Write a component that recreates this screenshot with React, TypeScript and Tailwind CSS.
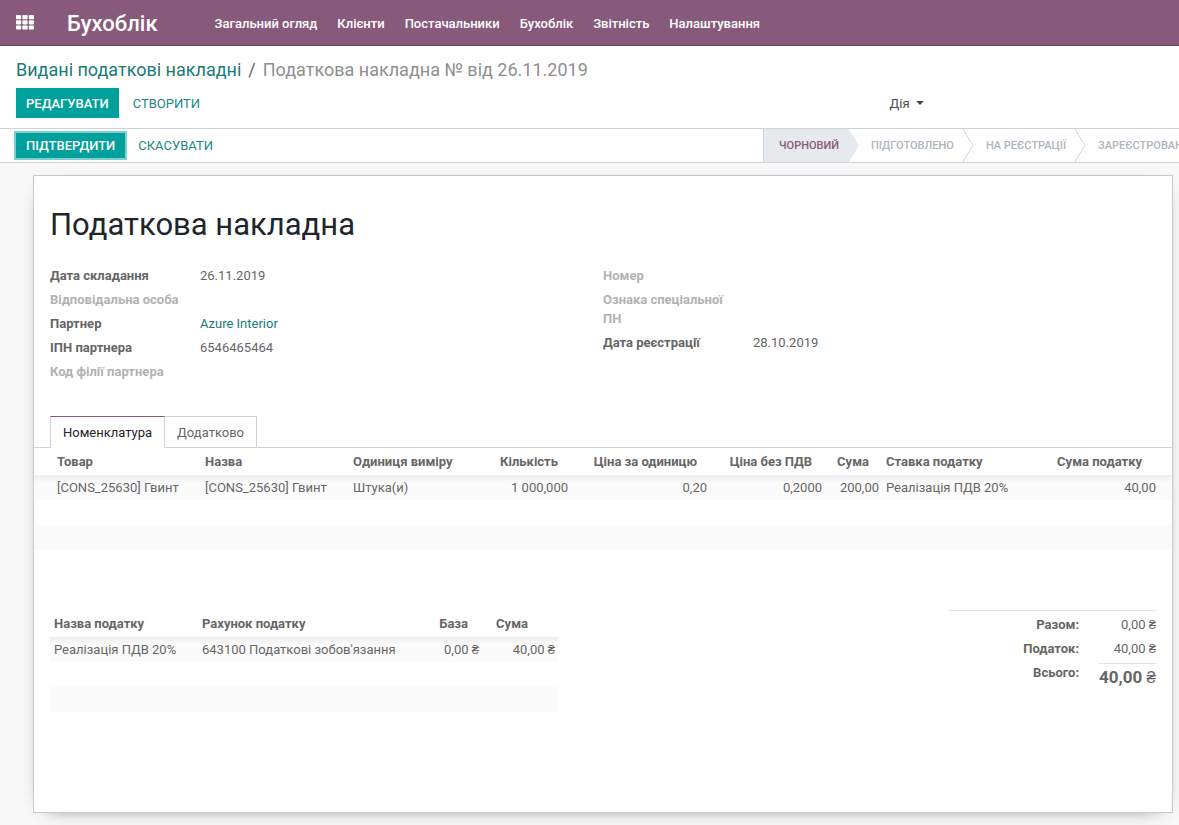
import React from "react";

const menus = ["Загальний огляд", "Клієнти", "Постачальники", "Бухоблік", "Звітність", "Налаштування"];

const steps = ["Чорновий", "Підготовлено", "На реєстрації", "Зареєстровано"];

type FieldData = { label: string; value?: string; link?: boolean };

const leftFields: FieldData[] = [
  { label: "Дата складання", value: "26.11.2019" },
  { label: "Відповідальна особа" },
  { label: "Партнер", value: "Azure Interior", link: true },
  { label: "ІПН партнера", value: "6546465464" },
  { label: "Код філії партнера" },
];

const rightFields: FieldData[] = [
  { label: "Номер" },
  { label: "Ознака спеціальної ПН" },
  { label: "Дата реєстрації", value: "28.10.2019" },
];

function AppsIcon() {
  return (
    <svg width="18" height="15" viewBox="0 0 18 15" fill="currentColor" aria-hidden="true">
      {[0, 5.2, 10.4].map((y) =>
        [0, 6.4, 12.8].map((x) => <rect key={`${x}-${y}`} x={x} y={y} width="5.2" height="4.2" rx="0.8" />)
      )}
    </svg>
  );
}

function Step({ label, active, last }: { label: string; active: boolean; last: boolean }) {
  return (
    <li className="flex shrink-0">
      <span
        className={
          active
            ? "flex items-center border-l border-[#ced4da] bg-[#e6eaed] pl-[15px] pr-2 pt-px text-[#875a7b]"
            : "flex items-center pl-3 pr-2 pt-px text-[#adb5bd]"
        }
      >
        {label}
      </span>
      {!last && (
        <svg width="12" height="33" viewBox="0 0 12 33" aria-hidden="true">
          {active ? (
            <path d="M0 0H2L12 16.5L2 33H0Z" fill="#e6eaed" />
          ) : (
            <path d="M1 0L11 16.5L1 33" fill="none" stroke="#ced4da" />
          )}
        </svg>
      )}
    </li>
  );
}

function Fields({ items }: { items: FieldData[] }) {
  return (
    <dl className="flex flex-col gap-[5px] leading-[19px]">
      {items.map((f) => (
        <div key={f.label} className="flex">
          <dt className={f.value ? "w-[150px] pr-5 font-bold" : "w-[150px] pr-5 font-bold text-[#b2b2b2]"}>
            {f.label}
          </dt>
          <dd>
            {f.link ? (
              <a href="#partner" className="text-[#1a7b74]">
                {f.value}
              </a>
            ) : (
              f.value
            )}
          </dd>
        </div>
      ))}
    </dl>
  );
}

const shade = "h-[25px] bg-[#fbfbfb]";
const shadeTop = "h-[25px] bg-[#fbfbfb] bg-linear-to-b from-[#ededed] to-[#fbfbfb] to-30%";

function Lines() {
  return (
    <table className="w-full table-fixed border-collapse whitespace-nowrap leading-[19px]">
      <colgroup>
        <col className="w-[167px]" />
        <col className="w-[148px]" />
        <col className="w-[148px]" />
        <col className="w-[74px]" />
        <col className="w-[139px]" />
        <col className="w-[115px]" />
        <col className="w-[57px]" />
        <col className="w-[148px]" />
        <col className="w-[142px]" />
      </colgroup>
      <thead>
        <tr className="h-[27px]">
          <th className="pl-[23px] text-left">Товар</th>
          <th className="pl-1 text-left">Назва</th>
          <th className="pl-1 text-left">Одиниця виміру</th>
          <th className="pr-[13px] text-right">Кількість</th>
          <th className="pr-[13px] text-right">Ціна за одиницю</th>
          <th className="pr-[13px] text-right">Ціна без ПДВ</th>
          <th className="pr-[13px] text-right">Сума</th>
          <th className="pl-1 text-left">Ставка податку</th>
          <th className="pr-[30px] text-right">Сума податку</th>
        </tr>
      </thead>
      <tbody>
        <tr className={shadeTop}>
          <td className="pl-[23px]">[CONS_25630] Гвинт</td>
          <td className="pl-1">[CONS_25630] Гвинт</td>
          <td className="pl-1">Штука(и)</td>
          <td className="pr-[3px] text-right">1 000,000</td>
          <td className="pr-[3px] text-right">0,20</td>
          <td className="pr-[3px] text-right">0,2000</td>
          <td className="pr-[3px] text-right">200,00</td>
          <td className="pl-1">Реалізація ПДВ 20%</td>
          <td className="pr-4 text-right">40,00</td>
        </tr>
        <tr className="h-[25px]">
          <td colSpan={9} />
        </tr>
        <tr className={shade}>
          <td colSpan={9} />
        </tr>
        <tr className="h-[25px]">
          <td colSpan={9} />
        </tr>
      </tbody>
    </table>
  );
}

function Taxes() {
  return (
    <table className="w-[508px] table-fixed border-collapse whitespace-nowrap leading-[19px]">
      <colgroup>
        <col className="w-[148px]" />
        <col className="w-[238px]" />
        <col className="w-[46px]" />
        <col className="w-[76px]" />
      </colgroup>
      <thead>
        <tr className="h-[27px]">
          <th className="pl-1 text-left">Назва податку</th>
          <th className="pl-1 text-left">Рахунок податку</th>
          <th className="pr-[14px] text-right">База</th>
          <th className="pr-[30px] text-right">Сума</th>
        </tr>
      </thead>
      <tbody>
        <tr className={shadeTop}>
          <td className="pl-1">Реалізація ПДВ 20%</td>
          <td className="pl-1">643100 Податкові зобов'язання</td>
          <td className="pr-[3px] text-right">0,00 ₴</td>
          <td className="pr-[3px] text-right">40,00 ₴</td>
        </tr>
        <tr className="h-[25px]">
          <td colSpan={4} />
        </tr>
        <tr className={shade}>
          <td colSpan={4} />
        </tr>
        <tr className="h-[25px]">
          <td colSpan={4} />
        </tr>
      </tbody>
    </table>
  );
}

export default function App() {
  return (
    <div className="flex min-h-screen flex-col overflow-hidden bg-[#f8f8f8] font-[Roboto,sans-serif] text-[13px] leading-5 text-[#666666]">
      <header className="flex h-[46px] items-center border-b border-[#5f4a63] bg-[#875a7b] text-white">
        <button type="button" aria-label="Програми" className="ml-4">
          <AppsIcon />
        </button>
        <a href="#home" className="ml-[33px] pt-0.5 text-[22px] font-medium leading-8">
          Бухоблік
        </a>
        <nav className="ml-[57px] flex gap-5 pt-0.5 font-medium">
          {menus.map((m) => (
            <a key={m} href="#menu">
              {m}
            </a>
          ))}
        </nav>
      </header>

      <section className="border-b border-[#ced4da] bg-white px-4 pb-[10px] pt-3">
        <nav className="flex gap-[7px] text-[18px] leading-6">
          <a href="#invoices" className="text-[#1a7b74]">
            Видані податкові накладні
          </a>
          <span>/</span>
          <span className="text-[#8f8f8f]">Податкова накладна № від 26.11.2019</span>
        </nav>
        <div className="mt-[6px] flex">
          <div className="flex w-1/2">
            <button type="button" className="h-[30px] bg-[#00a09d] px-[10px] pt-px font-medium uppercase text-white">
              Редагувати
            </button>
            <button type="button" className="h-[30px] px-[14px] pt-px uppercase text-[#1a8880]">
              Створити
            </button>
          </div>
          <div className="w-1/2 pl-[300px]">
            <button type="button" className="flex h-[30px] items-center gap-[6px] pt-px text-[#4c4c4c]">
              Дія
              <svg width="8" height="6" viewBox="0 0 8 6" fill="currentColor" aria-hidden="true">
                <path d="M0 0H8L4 4Z" />
              </svg>
            </button>
          </div>
        </div>
      </section>

      <section className="flex h-[34px] border-b border-[#ced4da] bg-white">
        <div className="flex flex-1 items-center pl-4">
          <button
            type="button"
            className="h-[25px] bg-[#00a09d] px-[10px] font-medium uppercase leading-[25px] text-white ring-2 ring-[#7fd0ce]"
          >
            Підтвердити
          </button>
          <button type="button" className="h-[25px] px-[13px] uppercase leading-[25px] text-[#1a8880]">
            Скасувати
          </button>
        </div>
        <ol className="flex w-[416px] overflow-hidden whitespace-nowrap text-[11px] font-medium uppercase">
          {steps.map((s, i) => (
            <Step key={s} label={s} active={i === 0} last={i === steps.length - 1} />
          ))}
        </ol>
      </section>

      <main className="mb-3 ml-[33px] mr-[6px] mt-3 flex-1 border border-[#c8c8d3] bg-white shadow-[0_5px_20px_-15px_#000000]">
        <h1 className="px-4 pt-[29px] text-[31px] leading-10 text-[#212529]">Податкова накладна</h1>
        <div className="grid grid-cols-2 px-4 pt-[21px]">
          <Fields items={leftFields} />
          <Fields items={rightFields} />
        </div>

        <div role="tablist" className="mt-[35px] flex border-b border-[#ced4da] px-4">
          <button
            type="button"
            role="tab"
            aria-selected="true"
            className="-mb-px h-8 border border-b-0 border-[#ced4da] border-t-[#875a7b] bg-white px-3 text-[#212529]"
          >
            Номенклатура
          </button>
          <button
            type="button"
            role="tab"
            aria-selected="false"
            className="h-[31px] border border-b-0 border-l-0 border-[#ced4da] px-3 pt-px"
          >
            Додатково
          </button>
        </div>
        <Lines />

        <div className="mt-[35px] flex items-start justify-between px-4 pb-[75px]">
          <Taxes />
          <dl className="grid w-[207px] grid-cols-[1fr_auto] gap-x-5 whitespace-nowrap border-t border-[#dee2e6] pt-1 text-right leading-[19px]">
            <dt className="h-6 font-bold">Разом:</dt>
            <dd>0,00 ₴</dd>
            <dt className="h-6 font-bold">Податок:</dt>
            <dd>40,00 ₴</dd>
            <dt className="font-bold">Всього:</dt>
            <dd className="border-t border-[#dee2e6] pt-1 text-[17px] font-bold">
              40,00 <span className="font-normal">₴</span>
            </dd>
          </dl>
        </div>
      </main>
    </div>
  );
}
